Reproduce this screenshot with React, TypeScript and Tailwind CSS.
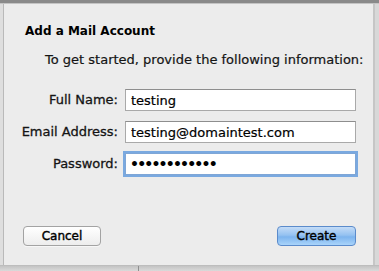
import React from "react";

type FieldRowProps = {
  label: string;
  value: string;
  secret?: boolean;
};

function FieldRow({ label, value, secret = false }: FieldRowProps) {
  return (
    <>
      <label className="h-[22px] flex items-center justify-end text-[13px] text-[#141414] [-webkit-text-stroke:0.3px_#141414]">
        {label}
      </label>
      {secret ? (
        <input
          type="text"
          value={value}
          readOnly
          className="h-[22px] w-full bg-white border border-[#7fa6d6] outline outline-2 outline-[#7aa9e0] pl-[4px] pr-[5px] text-[14px] font-bold tracking-[-1.8px] text-black"
        />
      ) : (
        <input
          type="text"
          value={value}
          readOnly
          className="h-[22px] w-full bg-white border border-[#a9a9a9] border-t-[#8e8e8e] px-[5px] text-[13px] text-black [-webkit-text-stroke:0.2px_#000]"
        />
      )}
    </>
  );
}

export default function App() {
  return (
    <div className="w-[379px] h-[271px] flex flex-col bg-[#d6d6d6] overflow-hidden font-['DejaVu_Sans',sans-serif]">
      <div className="h-[3px] bg-[#8a8a8a] shrink-0" />
      <div className="h-px bg-[#c4c4c4] shrink-0" />
      <div className="flex flex-1 min-h-0">
        <div className="w-[4px] bg-[#dedede] border-r border-[#b9b9b9] shrink-0" />
        <div className="flex-1 flex flex-col bg-[#ececec] pt-[20px] pb-[19px]">
          <h2 className="pl-[21px] text-[12px] leading-[14px] font-bold text-black">
            Add a Mail Account
          </h2>
          <p className="pl-[41px] mt-[14px] text-[13px] leading-[16px] text-[#141414] [-webkit-text-stroke:0.2px_#141414]">
            To get started, provide the following information:
          </p>
          <div className="mt-[21px] pr-[17px] grid grid-cols-[114px_1fr] gap-x-[7px] gap-y-[10px]">
            <FieldRow label="Full Name:" value="testing" />
            <FieldRow label="Email Address:" value="testing@domaintest.com" />
            <FieldRow label="Password:" value="••••••••••••" secret />
          </div>
          <div className="mt-auto flex items-center justify-between pl-[19px] pr-[17px]">
            <button
              type="button"
              className="w-[78px] h-[20px] rounded-[4px] border border-[#a3a3a3] bg-gradient-to-b from-white to-[#ededed] text-[12px] text-black [-webkit-text-stroke:0.4px_#000] shadow-[0_1px_0_rgba(255,255,255,0.6)]"
            >
              Cancel
            </button>
            <button
              type="button"
              className="w-[79px] h-[20px] rounded-[4px] border border-[#5b8bcb] bg-[linear-gradient(to_bottom,#c4dcf7_0%,#95c2f1_45%,#7db4ee_55%,#a9d4fa_100%)] text-[12px] text-black [-webkit-text-stroke:0.4px_#000]"
            >
              Create
            </button>
          </div>
        </div>
        <div className="w-[6px] bg-[#d8d8d8] border-l-2 border-[#c6c6c6] shrink-0" />
      </div>
      <div className="h-[6px] flex shrink-0 border-t border-[#bdbdbd] bg-gradient-to-b from-[#c3c3c3] to-[#dadada]">
        <div className="w-[138px]" />
        <div className="w-px bg-[#8f8f8f]" />
      </div>
    </div>
  );
}
